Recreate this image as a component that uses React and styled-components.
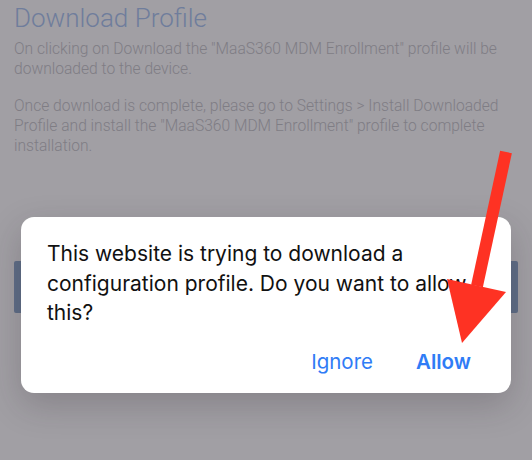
import styled, { createGlobalStyle } from 'styled-components';

const GlobalStyle = createGlobalStyle`
  html, body {
    margin: 0;
    padding: 0;
    background: #a19fa4;
  }
  body {
    width: 532px;
    height: 460px;
    overflow: hidden;
  }
`

export default function App() {
  return (
    <>
      <GlobalStyle />
      <Page>
        <Title>Download Profile</Title>
        <Para>
          On clicking on Download the "MaaS360 MDM Enrollment" profile will be downloaded to the device.
        </Para>
        <Para>
          Once download is complete, please go to Settings &gt; Install Downloaded Profile and install the "MaaS360 MDM Enrollment" profile to complete installation.
        </Para>
        <DownloadButton />
      </Page>

      <Dialog>
        <Message>
          This website is trying to download a configuration profile. Do you want to allow this?
        </Message>
        <Actions>
          <Action>Ignore</Action>
          <Action $bold>Allow</Action>
        </Actions>
      </Dialog>

      <Arrow viewBox="0 0 532 460" width="532" height="460">
        <line x1="506" y1="152" x2="477" y2="286" stroke="#fe3223" strokeWidth="12" />
        <polygon points="447,279 506,292 462,343" fill="#fe3223" />
      </Arrow>
    </>
  );
};

const Page = styled.div`
  padding: 0 14px;
  height: 460px;
  box-sizing: border-box;
  font-family: Roboto, "Liberation Sans", sans-serif;
`
const Title = styled.h1`
  margin: 0;
  padding-top: 2px;
  font-size: 26px;
  line-height: 32px;
  font-weight: 300;
  color: #6f7d9c;
`
const Para = styled.p`
  margin: 5px 0 17px;
  font-size: 15.6px;
  line-height: 20px;
  font-weight: 300;
  color: #7f7d84;
`
const DownloadButton = styled.div`
  margin-top: 105px;
  height: 52px;
  background: #5e6d86;
  border-radius: 2px;
`
const Dialog = styled.div`
  position: absolute;
  top: 217px;
  left: 21px;
  width: 490px;
  height: 176px;
  box-sizing: border-box;
  padding: 22px 38px 0 26px;
  background: #ffffff;
  border-radius: 13px;
  box-shadow: 0 12px 34px rgba(40, 30, 40, 0.22);
  font-family: Inter, "Noto Sans", sans-serif;
  display: flex;
  flex-direction: column;
`
const Message = styled.div`
  font-size: 21px;
  line-height: 29.5px;
  color: #111111;
`
const Actions = styled.div`
  margin-top: 22px;
  padding-right: 2px;
  display: flex;
  justify-content: flex-end;
  gap: 43px;
`
const Action = styled.div`
  font-size: 20.5px;
  line-height: 24px;
  color: #2f7cf6;
  font-weight: ${props => props.$bold ? 600 : 400};
`
const Arrow = styled.svg`
  position: absolute;
  top: 0;
  left: 0;
  pointer-events: none;
`
